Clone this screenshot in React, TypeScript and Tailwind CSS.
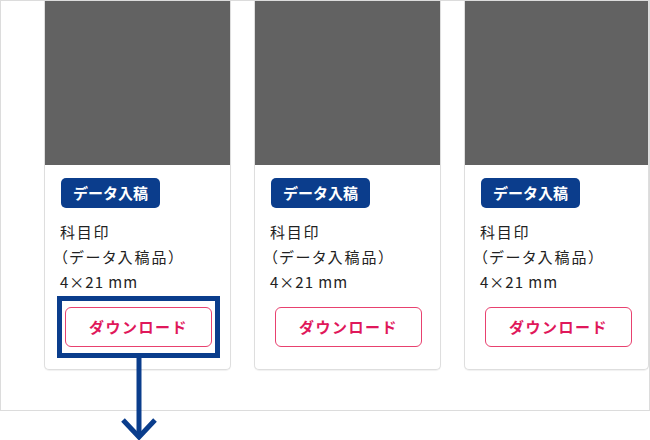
import React from "react";

// donnees des cartes produit
const cartes = [
  { id: 1, nom: "科目印", detail: "（データ入稿品）", taille: "4×21 mm", focus: true },
  { id: 2, nom: "科目印", detail: "（データ入稿品）", taille: "4×21 mm", focus: false },
  { id: 3, nom: "科目印", detail: "（データ入稿品）", taille: "4×21 mm", focus: false },
];

// carte produit avec badge et bouton de telechargement
function Carte({
  nom,
  detail,
  taille,
  focus,
  last,
}: {
  nom: string;
  detail: string;
  taille: string;
  focus: boolean;
  last: boolean;
}) {
  return (
    <div
      className={`${last ? "flex-1" : "w-[187px] shrink-0"} flex flex-col rounded-b-[5px] border-x border-b border-[#dedede] bg-white shadow-[0_1px_1px_rgba(0,0,0,0.06)]`}
    >
      <div className="h-[164px] bg-[#626262]" />
      <div className="flex flex-col pb-[22px] pl-[15px] pt-[13px]">
        <span className="ml-px w-fit rounded-[5px] bg-[#0b3d8c] px-[12px] text-[15px] font-bold leading-[30px] text-white">
          データ入稿
        </span>
        <div className="mt-[11px] text-[15px] leading-[25px] text-[#222] [font-feature-settings:'palt']">
          <p className="tracking-[1.8px]">{nom}</p>
          <p className="tracking-[2px]">{detail}</p>
          <p className="tracking-[1px]">{taille}</p>
        </div>
        <div className="relative ml-[5px] mt-[13px] w-[147px]">
          <button className="flex h-[40px] w-[147px] items-center justify-center rounded-[6px] border border-[#e8416f] bg-white text-[15px] font-bold tracking-[1.5px] text-[#e0185b]">
            ダウンロード
          </button>
          {focus && (
            <>
              <span className="pointer-events-none absolute -bottom-[11px] -left-[8px] -right-[8px] -top-[11px] border-[5px] border-[#0a3d8c]" />
              <svg
                className="absolute left-[55px] top-[51px]"
                width="38"
                height="82"
                viewBox="0 0 38 82"
              >
                <line x1="19" y1="0" x2="19" y2="78" stroke="#0a3d8c" strokeWidth="5" />
                <polyline
                  points="3,62 19,79 35,62"
                  fill="none"
                  stroke="#0a3d8c"
                  strokeWidth="5"
                />
              </svg>
            </>
          )}
        </div>
      </div>
    </div>
  );
}

export default function App() {
  return (
    <div
      className="relative h-[440px] w-[650px] bg-white"
      style={{ fontFamily: '"Noto Sans CJK JP", "Noto Sans", sans-serif' }}
    >
      <div className="flex h-[411px] w-[650px] items-start gap-[23px] border border-[#dcdcdc] pl-[43px]">
        {cartes.map((c, i) => (
          <Carte key={c.id} {...c} last={i === cartes.length - 1} />
        ))}
      </div>
    </div>
  );
}
